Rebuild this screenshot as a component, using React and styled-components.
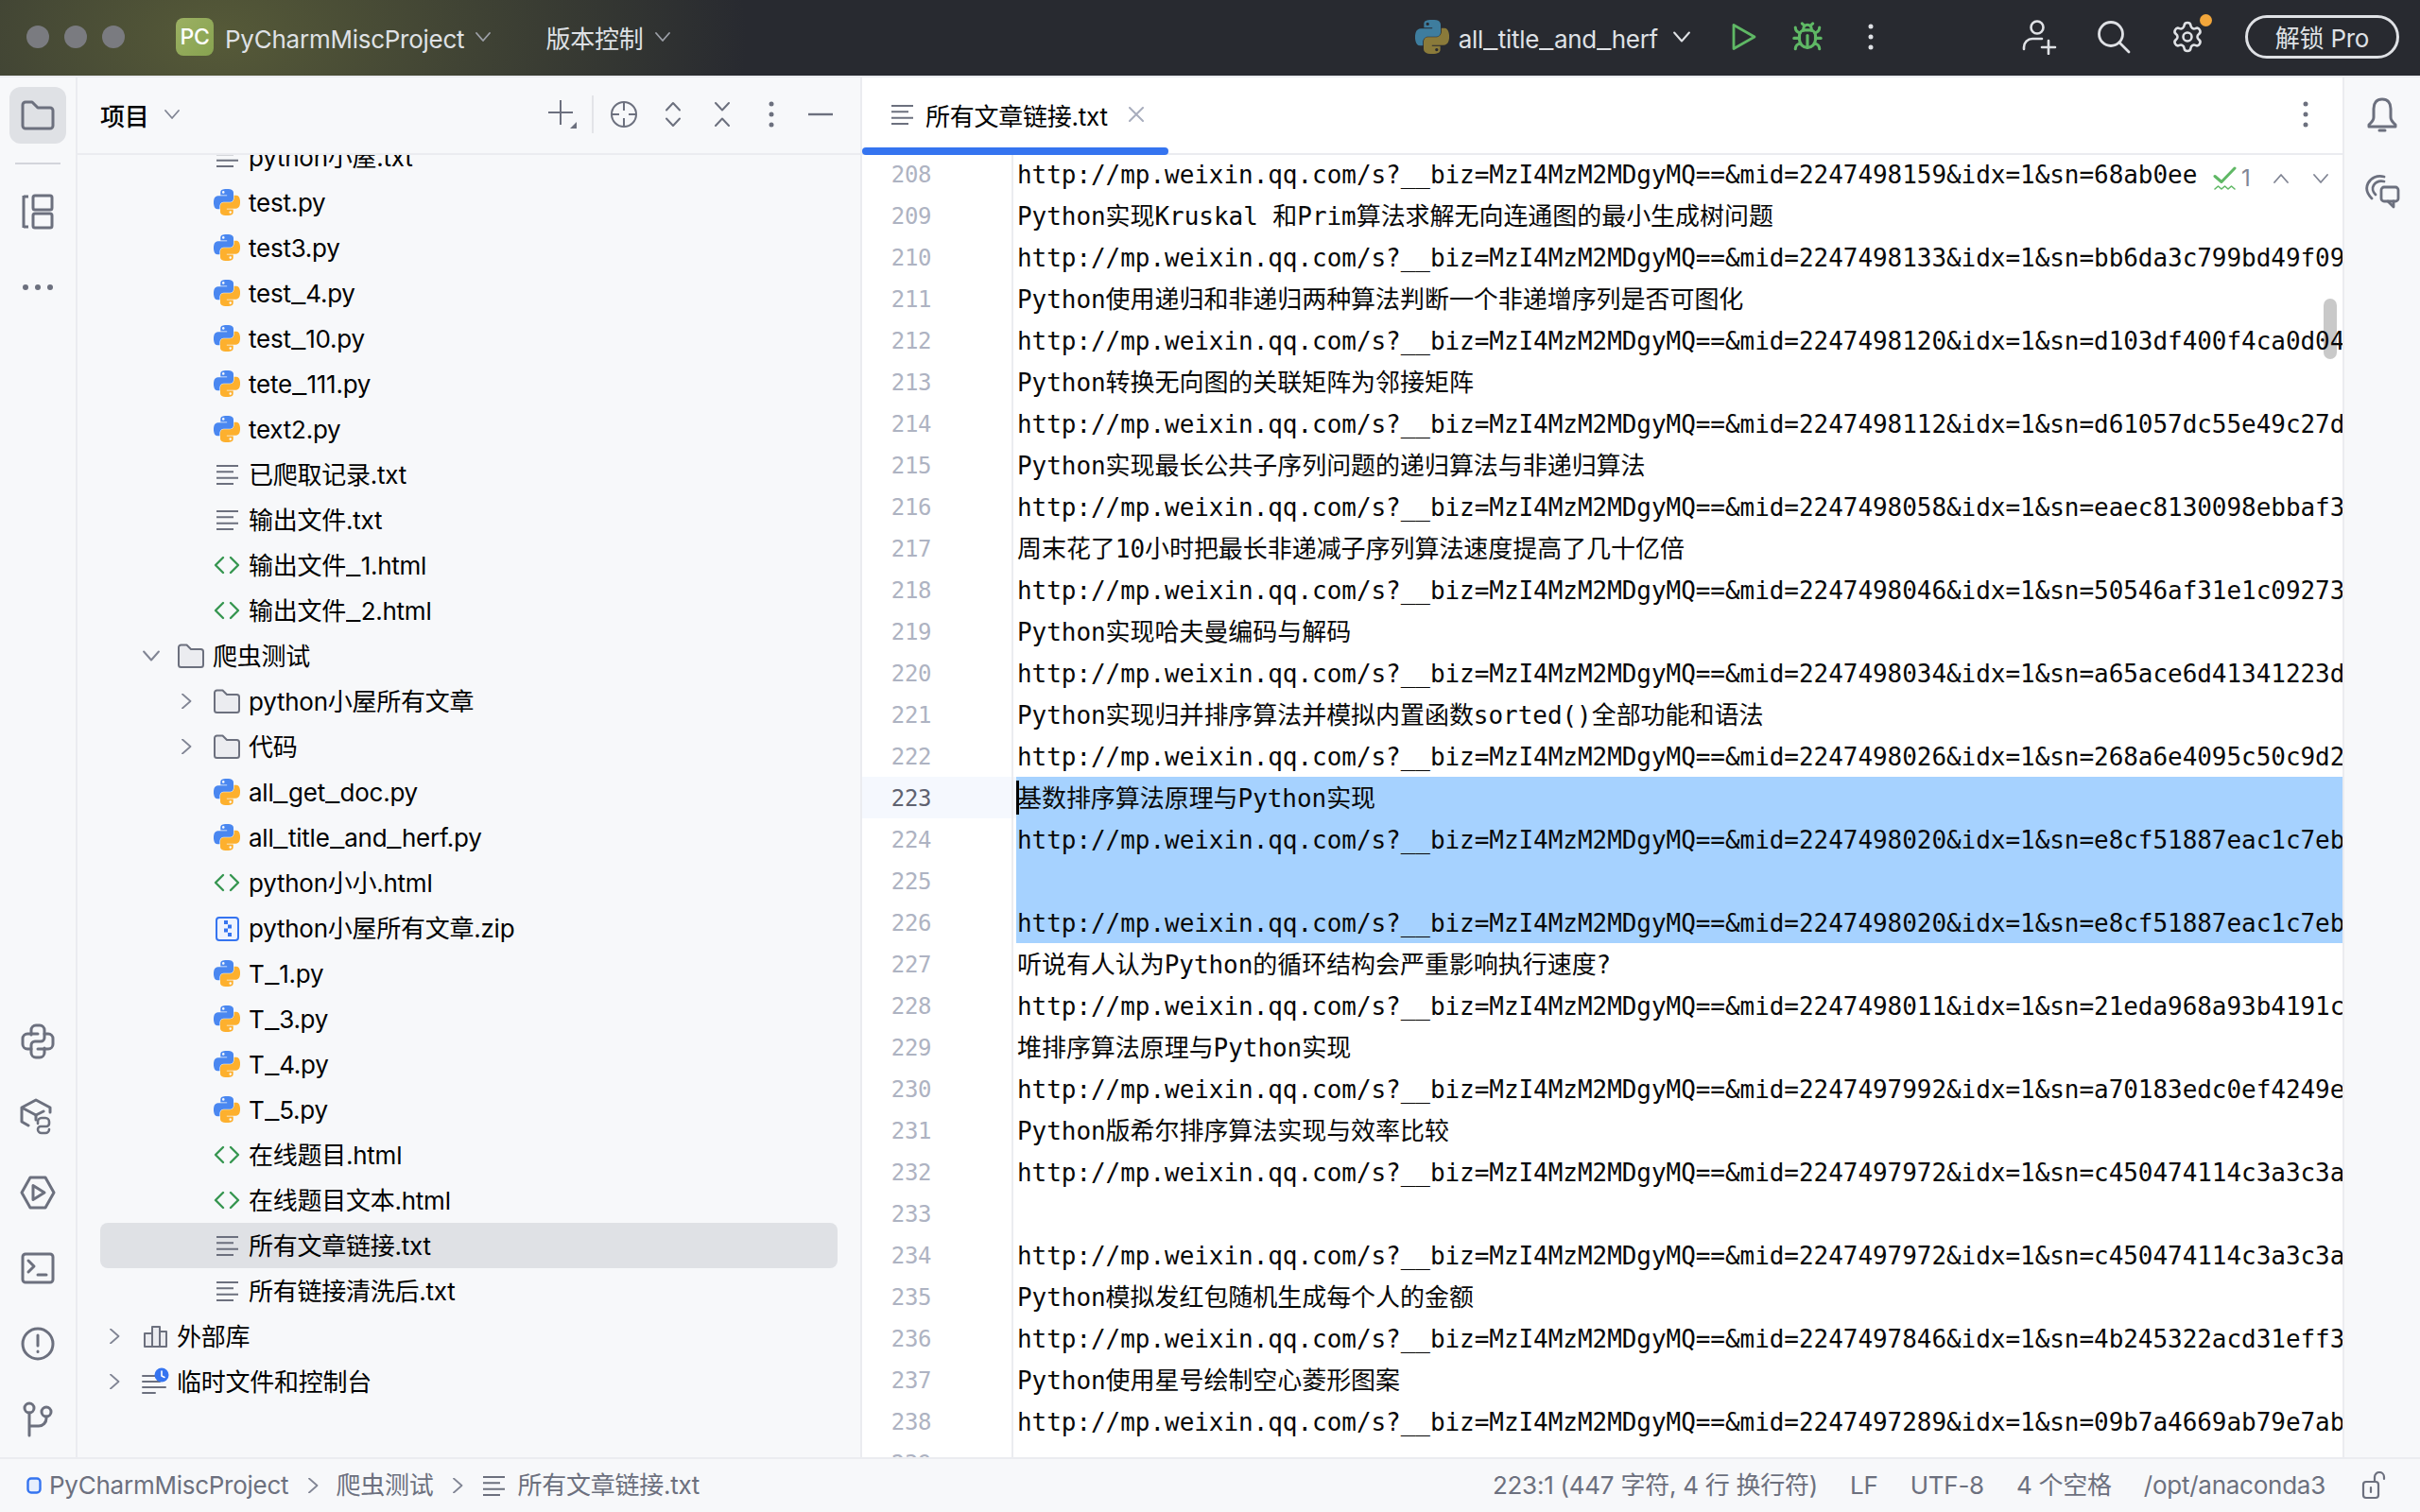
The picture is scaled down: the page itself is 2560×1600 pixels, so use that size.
import React from 'react';
import styled, { createGlobalStyle } from 'styled-components';
import { Bug, Settings } from 'lucide-react';

const GlobalStyle = createGlobalStyle`
  html, body { margin: 0; padding: 0; background: #f7f8fa; }
  body { font-family: Inter, "Noto Sans CJK SC", sans-serif; }
  * { box-sizing: border-box; }
`;

const tree = [
  { name: 'python小屋.txt', kind: 'text', depth: 2 },
  { name: 'test.py', kind: 'py', depth: 2 },
  { name: 'test3.py', kind: 'py', depth: 2 },
  { name: 'test_4.py', kind: 'py', depth: 2 },
  { name: 'test_10.py', kind: 'py', depth: 2 },
  { name: 'tete_111.py', kind: 'py', depth: 2 },
  { name: 'text2.py', kind: 'py', depth: 2 },
  { name: '已爬取记录.txt', kind: 'text', depth: 2 },
  { name: '输出文件.txt', kind: 'text', depth: 2 },
  { name: '输出文件_1.html', kind: 'html', depth: 2 },
  { name: '输出文件_2.html', kind: 'html', depth: 2 },
  { name: '爬虫测试', kind: 'folder', depth: 1, open: true },
  { name: 'python小屋所有文章', kind: 'folder', depth: 2, closed: true },
  { name: '代码', kind: 'folder', depth: 2, closed: true },
  { name: 'all_get_doc.py', kind: 'py', depth: 2 },
  { name: 'all_title_and_herf.py', kind: 'py', depth: 2 },
  { name: 'python小小.html', kind: 'html', depth: 2 },
  { name: 'python小屋所有文章.zip', kind: 'zip', depth: 2 },
  { name: 'T_1.py', kind: 'py', depth: 2 },
  { name: 'T_3.py', kind: 'py', depth: 2 },
  { name: 'T_4.py', kind: 'py', depth: 2 },
  { name: 'T_5.py', kind: 'py', depth: 2 },
  { name: '在线题目.html', kind: 'html', depth: 2 },
  { name: '在线题目文本.html', kind: 'html', depth: 2 },
  { name: '所有文章链接.txt', kind: 'text', depth: 2, selected: true },
  { name: '所有链接清洗后.txt', kind: 'text', depth: 2 },
  { name: '外部库', kind: 'lib', depth: 0, closed: true },
  { name: '临时文件和控制台', kind: 'scratch', depth: 0, closed: true },
];

const url = (mid, sn) =>
  `http://mp.weixin.qq.com/s?__biz=MzI4MzM2MDgyMQ==&mid=${mid}&idx=1&sn=${sn}`;

const lines = [
  url('2247498159', '68ab0eea1c5e2d9x'),
  'Python实现Kruskal 和Prim算法求解无向连通图的最小生成树问题',
  url('2247498133', 'bb6da3c799bd49f09'),
  'Python使用递归和非递归两种算法判断一个非递增序列是否可图化',
  url('2247498120', 'd103df400f4ca0d04'),
  'Python转换无向图的关联矩阵为邻接矩阵',
  url('2247498112', 'd61057dc55e49c27d'),
  'Python实现最长公共子序列问题的递归算法与非递归算法',
  url('2247498058', 'eaec8130098ebbaf3'),
  '周末花了10小时把最长非递减子序列算法速度提高了几十亿倍',
  url('2247498046', '50546af31e1c09273'),
  'Python实现哈夫曼编码与解码',
  url('2247498034', 'a65ace6d41341223d'),
  'Python实现归并排序算法并模拟内置函数sorted()全部功能和语法',
  url('2247498026', '268a6e4095c50c9d2'),
  '基数排序算法原理与Python实现',
  url('2247498020', 'e8cf51887eac1c7eb'),
  '',
  url('2247498020', 'e8cf51887eac1c7eb'),
  '听说有人认为Python的循环结构会严重影响执行速度?',
  url('2247498011', '21eda968a93b4191c'),
  '堆排序算法原理与Python实现',
  url('2247497992', 'a70183edc0ef4249e'),
  'Python版希尔排序算法实现与效率比较',
  url('2247497972', 'c450474114c3a3c3a'),
  '',
  url('2247497972', 'c450474114c3a3c3a'),
  'Python模拟发红包随机生成每个人的金额',
  url('2247497846', '4b245322acd31eff3'),
  'Python使用星号绘制空心菱形图案',
  url('2247497289', '09b7a4669ab79e7ab'),
  '',
];

// icons
const G = '#6c707e';
const Svg = styled.svg`
  display: block;
  flex: none;
  fill: none;
  stroke-linecap: round;
  stroke-linejoin: round;
`;

const snake =
  'M54.9 0C50.3 0 46 .4 42.1 1.1 30.7 3.1 28.6 7.3 28.6 15v10.2h27v3.4H18.5c-7.9 0-14.7 4.7-16.9 13.7-2.5 10.3-2.6 16.7 0 27.4 1.9 8 6.5 13.6 14.3 13.6h9.3V71c0-8.9 7.7-16.8 16.9-16.8H69c7.5 0 13.5-6.2 13.5-13.7V15c0-7.3-6.2-12.7-13.5-13.9C64.4.3 59.6 0 54.9 0ZM40.3 8.3a5.1 5.1 0 1 1 0 10.2 5.1 5.1 0 0 1 0-10.2Z';

const PythonIcon = ({ size = 28, blue = '#4a87f0', yellow = '#fdb02e' }) => (
  <Svg width={size} height={size} viewBox="0 0 110 110">
    <path d={snake} fill={blue} fillRule="evenodd" />
    <path d={snake} fill={yellow} fillRule="evenodd" transform="rotate(180 55 55)" />
  </Svg>
);

const TextIcon = ({ color = G }) => (
  <Svg width="28" height="24" viewBox="0 0 28 24" stroke={color} strokeWidth="2">
    <path d="M3 3h23M3 9.300h18M3 15.700h23M3 22h18" strokeLinecap="butt" />
  </Svg>
);

const HtmlIcon = () => (
  <Svg width="28" height="22" viewBox="0 0 28 22" stroke="#369650" strokeWidth="2.400">
    <path d="M10 3 2 11l8 8M18 3l8 8-8 8" />
  </Svg>
);

const FolderIcon = () => (
  <Svg width="28" height="26" viewBox="0 0 28 26" stroke={G} strokeWidth="2" style={{ fill: '#ebecf0' }}>
    <path d="M1 4a2.500 2.500 0 0 1 2.500-2.500h6L14 6h10.500A2.500 2.500 0 0 1 27 8.500v14a2.500 2.500 0 0 1-2.500 2.500h-21A2.500 2.500 0 0 1 1 22.500Z" />
  </Svg>
);

const ZipIcon = () => (
  <Svg width="28" height="28" viewBox="0 0 28 28">
    <rect x="3" y="3" width="23" height="24" rx="3" fill="#eef3fe" stroke="#3574f0" strokeWidth="2" />
    <path d="M11 6h4v4h-4zM15 10.500h4v4h-4zM11 14.500h4v4h-4zM15 19h4v4h-4z" fill="#3574f0" />
  </Svg>
);

const LibIcon = () => (
  <Svg width="28" height="24" viewBox="0 0 28 24" stroke={G} strokeWidth="2" style={{ fill: '#ebecf0' }}>
    <path d="M3 9h8v14H3zM11 2h8v21h-8zM19 7h7v16h-7z" />
  </Svg>
);

const ScratchIcon = () => (
  <Svg width="30" height="30" viewBox="0 0 30 30">
    <path d="M2 9h13M2 15h18M2 21h24M2 27h13" stroke={G} strokeWidth="2" />
    <circle cx="22" cy="8" r="7.500" fill="#3574f0" />
    <path d="M22 4v5l3 1.500" stroke="#fff" strokeWidth="1.600" />
  </Svg>
);

const fileIcons = {
  py: <PythonIcon />,
  text: <TextIcon />,
  html: <HtmlIcon />,
  folder: <FolderIcon />,
  zip: <ZipIcon />,
  lib: <LibIcon />,
  scratch: <ScratchIcon />,
};

const ChevronDown = ({ size = 16, color = G, width = 1.800 }) => (
  <Svg width={size} height={size} viewBox="0 0 16 16" stroke={color} strokeWidth={width}>
    <path d="M1 4 8 12l7-8" />
  </Svg>
);

const ChevronRight = ({ size = 16, color = '#818594', width = 1.800 }) => (
  <Svg width={size} height={size} viewBox="0 0 16 16" stroke={color} strokeWidth={width}>
    <path d="M4 .5 12.500 8 4 15.500" />
  </Svg>
);

const ChevronUp = ({ size = 16, color = G, width = 1.800 }) => (
  <Svg width={size} height={size} viewBox="0 0 16 16" stroke={color} strokeWidth={width}>
    <path d="M1 12 8 4l7 8" />
  </Svg>
);

const Dots = ({ color = G, h = 28 }) => (
  <Svg width="6" height={h} viewBox={`0 0 6 ${h}`} style={{ fill: color }}>
    <circle cx="3" cy="3" r="2.500" />
    <circle cx="3" cy={h / 2} r="2.500" />
    <circle cx="3" cy={h - 3} r="2.500" />
  </Svg>
);

const StripFolder = () => (
  <Svg width="36" height="32" viewBox="0 0 36 32" stroke={G} strokeWidth="3">
    <path d="M2 5a3 3 0 0 1 3-3h7l6 6h13a3 3 0 0 1 3 3v16a3 3 0 0 1-3 3H5a3 3 0 0 1-3-3Z" />
  </Svg>
);

const StripStructure = () => (
  <Svg width="34" height="38" viewBox="0 0 34 38" stroke={G} strokeWidth="3">
    <path d="M2 2v34M2 3h5M2 35h5" strokeLinecap="butt" />
    <rect x="12" y="2" width="20" height="15" rx="2" />
    <rect x="12" y="21" width="20" height="15" rx="2" />
  </Svg>
);

const StripDots = () => (
  <Svg width="34" height="8" viewBox="0 0 34 8" style={{ fill: G }}>
    <circle cx="4" cy="4" r="3" />
    <circle cx="17" cy="4" r="3" />
    <circle cx="30" cy="4" r="3" />
  </Svg>
);

const StripPython = () => (
  <Svg width="36" height="38" viewBox="0 0 36 38" stroke={G} strokeWidth="3">
    <path d="M11 12V7a5 5 0 0 1 5-5h4a5 5 0 0 1 5 5v8a4 4 0 0 1-4 4h-6a4 4 0 0 0-4 4v4H7a5 5 0 0 1-5-5v-6a5 5 0 0 1 5-5h11" />
    <path d="M25 26v5a5 5 0 0 1-5 5h-4a5 5 0 0 1-5-5v-4M25 11h4a5 5 0 0 1 5 5v6a5 5 0 0 1-5 5H18" />
  </Svg>
);

const StripPackage = () => (
  <Svg width="38" height="40" viewBox="0 0 38 40" stroke={G} strokeWidth="3">
    <path d="M9 29 2 25V10l15-8 15 8v5M2 10l15 8 8-4" />
    <path d="M17 18v5" />
    <path d="M19 27v-2a4 4 0 0 1 4-4h4a4 4 0 0 1 4 4v2a3 3 0 0 1-3 3h-6a3 3 0 0 0-3 3v0a4 4 0 0 0 4 4h4a4 4 0 0 0 4-4" strokeWidth="2.600" />
  </Svg>
);

const StripRun = () => (
  <Svg width="38" height="38" viewBox="0 0 38 38" stroke={G} strokeWidth="3">
    <path d="M11 3h16l9 16-9 16H11L2 19Z" />
    <path d="M14 11.500v15L26 19Z" />
  </Svg>
);

const StripTerminal = () => (
  <Svg width="36" height="34" viewBox="0 0 36 34" stroke={G} strokeWidth="3">
    <rect x="2" y="2" width="32" height="30" rx="3" />
    <path d="m8 9 6 6-6 6M18 24h9" />
  </Svg>
);

const StripProblems = () => (
  <Svg width="36" height="36" viewBox="0 0 36 36" stroke={G} strokeWidth="3">
    <circle cx="18" cy="18" r="16" />
    <path d="M18 9v11M18 26v.5" />
  </Svg>
);

const StripGit = () => (
  <Svg width="32" height="38" viewBox="0 0 32 38" stroke={G} strokeWidth="3">
    <circle cx="7" cy="7" r="5" />
    <circle cx="25" cy="11" r="5" />
    <path d="M7 12v24M25 16v2a8 8 0 0 1-8 8H7" />
  </Svg>
);

const Bell = () => (
  <Svg width="34" height="38" viewBox="0 0 34 38" stroke={G} strokeWidth="3">
    <path d="M17 2C11 2 8 6 8 12v9c0 4-3 6-5 8v2h28v-2c-2-2-5-4-5-8v-9c0-6-3-10-9-10Z" />
    <path d="M14 35h6" />
  </Svg>
);

const AiChat = () => (
  <Svg width="38" height="38" viewBox="0 0 38 38" stroke={G} strokeWidth="2.800">
    <path d="M8 27C3 22 1 17 4 11S14 2 21 4" />
    <path d="M12 23c-3-3-4-7-2-10s6-5 11-4" />
    <rect x="18" y="15" width="18" height="15" rx="3" />
    <path d="M31 30v6l-6-6" />
  </Svg>
);

const PlusDrop = () => (
  <Svg width="32" height="32" viewBox="0 0 32 32" stroke={G} strokeWidth="2">
    <path d="M14 1v26M1 14h26" strokeLinecap="butt" />
    <path d="M31 24v7h-7Z" style={{ fill: G }} strokeWidth="0" />
  </Svg>
);

const Crosshair = () => (
  <Svg width="30" height="30" viewBox="0 0 30 30" stroke={G} strokeWidth="2">
    <circle cx="15" cy="15" r="13" />
    <path d="M15 2v9M15 19v9M2 15h8M20 15h8" strokeLinecap="butt" />
  </Svg>
);

const ExpandAll = () => (
  <Svg width="18" height="28" viewBox="0 0 18 28" stroke={G} strokeWidth="2">
    <path d="M2 9.500 9 2l7 7.500M2 18.500 9 26l7-7.500" />
  </Svg>
);

const CollapseAll = () => (
  <Svg width="18" height="28" viewBox="0 0 18 28" stroke={G} strokeWidth="2">
    <path d="M2 2l7 7.500L16 2M2 26l7-7.500 7 7.500" />
  </Svg>
);

const Minus = () => (
  <Svg width="26" height="4" viewBox="0 0 26 4" stroke={G} strokeWidth="2.400">
    <path d="M0 2h26" strokeLinecap="butt" />
  </Svg>
);

const CloseX = () => (
  <Svg width="16" height="16" viewBox="0 0 16 16" stroke="#a8adbd" strokeWidth="2">
    <path d="m1 1 14 14M15 1 1 15" />
  </Svg>
);

const RunIcon = () => (
  <Svg width="28" height="30" viewBox="0 0 28 30" stroke="#5fb865" strokeWidth="2.800">
    <path d="M3 2.500v25L25 15Z" />
  </Svg>
);

const AddUser = () => (
  <Svg width="38" height="38" viewBox="0 0 38 38" stroke="#dfe1e5" strokeWidth="2.600">
    <circle cx="16" cy="9" r="6.500" />
    <path d="M2 32v-2a9 9 0 0 1 9-9h10M28 23v14M21 30h14" />
  </Svg>
);

const Search = () => (
  <Svg width="36" height="36" viewBox="0 0 36 36" stroke="#dfe1e5" strokeWidth="2.800">
    <circle cx="15" cy="15" r="12.500" />
    <path d="m24 24 10 10" />
  </Svg>
);

const CheckMark = () => (
  <Svg width="26" height="26" viewBox="0 0 26 26">
    <path d="M2 10.500 9 16.500 23 2" stroke="#5fb865" strokeWidth="3" />
    <path d="M2 24l3.500-3 3.500 3 3.500-3 3.500 3 3.500-3 3.500 3" stroke="#5fb865" strokeWidth="1.600" />
  </Svg>
);

const Lock = () => (
  <Svg width="28" height="30" viewBox="0 0 28 30" stroke={G} strokeWidth="2.200">
    <rect x="2" y="11" width="16" height="17" rx="3" />
    <path d="M10 17v5" />
    <path d="M14 11V6a5 5 0 0 1 10 0v2" />
  </Svg>
);

const ProjectDot = () => (
  <Svg width="16" height="18" viewBox="0 0 16 18">
    <rect x="1.500" y="1.500" width="13" height="15" rx="3.500" fill="#e7effd" stroke="#3574f0" strokeWidth="2.400" />
  </Svg>
);

// layout
const Page = styled.div`
  width: 2560px;
  height: 1600px;
  display: flex;
  flex-direction: column;
  overflow: hidden;
  font-family: Inter, "Noto Sans CJK SC", sans-serif;
  font-size: 26px;
  line-height: 32px;
  letter-spacing: -0.25px;
  background: #f7f8fa;
`;

// text sits a little lower than the icons beside it
const Label = styled.span`
  padding-top: ${(p) => p.$drop || 0}px;
  margin-right: ${(p) => p.$right || 0}px;
`;

const TitleBar = styled.header`
  flex: none;
  height: 82px;
  display: flex;
  align-items: center;
  padding: 0 22px 2px 28px;
  border-bottom: 2px solid #ebecf0;
  color: #dfe1e5;
  background:
    radial-gradient(ellipse 560px 340px at 230px 40px, #565a38 0%, rgba(86, 90, 56, 0) 100%),
    #282a30;
`;

const Lights = styled.div`
  display: flex;
  gap: 16px;
  margin-right: 54px;
`;

const Light = styled.span`
  width: 24px;
  height: 24px;
  border-radius: 50%;
  background: #7a7b80;
`;

const ProjectBadge = styled.div`
  width: 40px;
  height: 40px;
  border-radius: 8px;
  margin-right: 12px;
  display: flex;
  align-items: center;
  justify-content: center;
  color: #fff;
  font-size: 23px;
  font-weight: 500;
  background: linear-gradient(135deg, #9cb063, #87a350);
`;

const TitleMenu = styled.div`
  display: flex;
  align-items: center;
  gap: ${(p) => p.$gap || 12}px;
  margin-right: ${(p) => p.$after || 0}px;
  white-space: nowrap;
`;

const RunSlot = styled.div`
  flex: none;
  width: ${(p) => p.$w}px;
  display: flex;
  align-items: center;
  justify-content: center;
  margin-left: ${(p) => p.$left || 0}px;
  margin-right: ${(p) => p.$right || 0}px;
`;

const RunConfig = styled.div`
  margin-left: auto;
  display: flex;
  align-items: center;
  gap: 10px;
  white-space: nowrap;
`;

const BadgeWrap = styled.div`
  position: relative;
  display: flex;
`;

const OrangeDot = styled.span`
  position: absolute;
  top: -6px;
  right: -8px;
  width: 13px;
  height: 13px;
  border-radius: 50%;
  background: #f2a63b;
`;

const ProButton = styled.div`
  flex: none;
  width: 163px;
  height: 46px;
  margin-left: 22px;
  padding-top: 3px;
  border: 3px solid #dfe1e5;
  border-radius: 23px;
  display: flex;
  align-items: center;
  justify-content: center;
`;

const Middle = styled.div`
  flex: 1;
  min-height: 0;
  display: flex;
`;

const LeftStrip = styled.nav`
  flex: none;
  width: 82px;
  display: flex;
  flex-direction: column;
  align-items: center;
  padding: 10px 0;
  border-right: 2px solid #ebecf0;
`;

const StripButton = styled.div`
  flex: none;
  width: 60px;
  height: 60px;
  margin-bottom: 20px;
  border-radius: 12px;
  display: flex;
  align-items: center;
  justify-content: center;
  background: ${(p) => (p.$active ? '#dfe1e5' : 'transparent')};
  &:last-child { margin-bottom: 0; }
`;

const StripSep = styled.div`
  width: 48px;
  height: 2px;
  flex: none;
  margin: 0 0 20px;
  background: #d3d5db;
`;

const StripBottom = styled.div`
  margin-top: auto;
  display: flex;
  flex-direction: column;
  align-items: center;
`;

const ProjectPanel = styled.aside`
  flex: none;
  width: 830px;
  display: flex;
  flex-direction: column;
  border-right: 2px solid #ebecf0;
  min-height: 0;
`;

const PanelHeader = styled.div`
  flex: none;
  height: 82px;
  padding: 0 16px 2px 24px;
  display: flex;
  align-items: center;
  border-bottom: 2px solid #ebecf0;
`;

const PanelTitle = styled.div`
  display: flex;
  align-items: center;
  gap: 16px;
  font-weight: 500;
  color: #000;
  margin-right: auto;
`;

const HeaderSep = styled.div`
  width: 2px;
  height: 40px;
  margin: 0 6px 0 5px;
  background: #e3e4e8;
`;

const TreeScroll = styled.div`
  flex: 1;
  min-height: 0;
  overflow: hidden;
`;

const TreeList = styled.ul`
  list-style: none;
  margin: -22px 0 0;
  padding: 0;
`;

const TreeRow = styled.li`
  height: 48px;
  margin: 0 24px;
  padding-left: ${(p) => 12 + p.$depth * 38}px;
  display: flex;
  align-items: center;
  border-radius: 8px;
  color: #000;
  white-space: nowrap;
  background: ${(p) => (p.$selected ? '#dfe1e5' : 'transparent')};
`;

const ChevronSlot = styled.span`
  flex: none;
  width: 37px;
  margin-left: -5px;
  display: flex;
`;

const IconSlot = styled.span`
  flex: none;
  width: 28px;
  margin-right: 9px;
  display: flex;
  align-items: center;
  justify-content: center;
`;

// the reference's underscore is wider than this Inter's
const Underscore = styled.span`
  display: inline-block;
  margin-right: 4px;
  transform: scaleX(1.3);
  transform-origin: left center;
`;

const FileName = ({ name, drop = 2, right = 0 }) => (
  <Label $drop={drop} $right={right}>
    {name.split('_').map((part, i) => (
      <React.Fragment key={i}>
        {i > 0 && <Underscore>_</Underscore>}
        {part}
      </React.Fragment>
    ))}
  </Label>
);

const Editor = styled.main`
  flex: 1;
  min-width: 0;
  display: flex;
  flex-direction: column;
  background: #fff;
`;

const TabBar = styled.div`
  position: relative;
  flex: none;
  height: 82px;
  display: flex;
  align-items: center;
  padding: 0 36px 2px 28px;
  border-bottom: 2px solid #ebecf0;
`;

const TabLabel = styled.div`
  display: flex;
  align-items: center;
  gap: 11px;
  color: #000;
  white-space: nowrap;
`;

const TabClose = styled.span`
  margin-left: 22px;
  margin-right: auto;
  display: flex;
`;

const TabUnderline = styled.div`
  position: absolute;
  left: 0;
  bottom: -2px;
  width: 324px;
  height: 8px;
  border-radius: 4px;
  background: #3574f0;
`;

const EditorBody = styled.div`
  position: relative;
  flex: 1;
  min-height: 0;
  overflow: hidden;
`;

const Lines = styled.div`
  margin-top: -2px;
  font-family: "DejaVu Sans Mono", "Noto Sans CJK SC", monospace;
  font-size: 26px;
  letter-spacing: -0.05px;
  color: #080808;
`;

const Line = styled.div`
  height: 44px;
  display: flex;
  background: ${(p) => (p.$current ? '#f5f8fe' : 'transparent')};
`;

const LineNo = styled.div`
  flex: none;
  width: 160px;
  padding-right: 85px;
  text-align: right;
  line-height: 47px;
  font-size: 24px;
  letter-spacing: -0.4px;
  color: ${(p) => (p.$current ? '#5f6270' : '#aeb3c2')};
  border-right: 2px solid #ebecf0;
`;

const Code = styled.div`
  position: relative;
  flex: 1;
  min-width: 0;
  margin-left: 3px;
  padding-left: 1px;
  line-height: 47px;
  white-space: pre;
  overflow: hidden;
  background: ${(p) => (p.$selected ? '#a6d2ff' : p.$current ? '#f5f8fe' : 'transparent')};
`;

const Caret = styled.span`
  position: absolute;
  left: 0;
  top: 4px;
  width: 3px;
  height: 36px;
  background: #000;
`;

const InspectionWidget = styled.div`
  position: absolute;
  top: 2px;
  left: 1412px;
  width: 149px;
  height: 42px;
  display: flex;
  align-items: center;
  padding: 4px 0 0 17px;
  background: #fff;
  font-size: 24px;
  color: #818594;
`;

const WidgetCount = styled.span`
  margin-left: 4px;
  margin-right: 24px;
`;

const WidgetArrow = styled.span`
  display: flex;
  margin-right: 26px;
`;

const ScrollThumb = styled.div`
  position: absolute;
  left: 1546px;
  top: 152px;
  width: 14px;
  height: 64px;
  border-radius: 7px;
  background: rgba(0, 0, 0, 0.21);
`;

const RightStrip = styled.nav`
  flex: none;
  width: 82px;
  display: flex;
  flex-direction: column;
  align-items: center;
  padding-top: 10px;
  border-left: 2px solid #ebecf0;
`;

const StatusBar = styled.footer`
  flex: none;
  height: 58px;
  display: flex;
  align-items: center;
  padding: 0 34px 0 28px;
  border-top: 2px solid #ebecf0;
  color: ${G};
  white-space: nowrap;
`;

const Crumb = styled.div`
  display: flex;
  align-items: center;
  gap: ${(p) => p.$gap || 11}px;
`;

const CrumbSep = styled.span`
  display: flex;
  margin: 0 16px 0 18px;
`;

const StatusRight = styled.div`
  margin-left: auto;
  display: flex;
  align-items: center;
  gap: 34px;
`;

const LockSlot = styled.span`
  display: flex;
  margin-left: 4px;
`;

const App = () => {
  return (
    <Page>
      <GlobalStyle />
      <TitleBar>
        <Lights>
          <Light />
          <Light />
          <Light />
        </Lights>
        <ProjectBadge>PC</ProjectBadge>
        <TitleMenu $after={58}>
          <Label $drop={5}>PyCharmMiscProject</Label>
          <ChevronDown color="#9da0a8" />
        </TitleMenu>
        <TitleMenu $gap={13}>
          <Label $drop={5}>版本控制</Label>
          <ChevronDown color="#9da0a8" />
        </TitleMenu>
        <RunConfig>
          <PythonIcon size={36} blue="#3e7d9e" yellow="#8a7a3a" />
          <FileName name="all_title_and_herf" drop={5} right={6} />
          <ChevronDown color="#dfe1e5" size={18} />
        </RunConfig>
        <RunSlot $w={67} $left={23}><RunIcon /></RunSlot>
        <RunSlot $w={67}><Bug size={34} color="#5fb865" strokeWidth={2.2} /></RunSlot>
        <RunSlot $w={67} $right={107}><Dots color="#dfe1e5" /></RunSlot>
        <RunSlot $w={78}><AddUser /></RunSlot>
        <RunSlot $w={78}><Search /></RunSlot>
        <RunSlot $w={78}>
          <BadgeWrap>
            <Settings size={36} color="#dfe1e5" strokeWidth={1.7} />
            <OrangeDot />
          </BadgeWrap>
        </RunSlot>
        <ProButton>解锁 Pro</ProButton>
      </TitleBar>

      <Middle>
        <LeftStrip>
          <StripButton $active><StripFolder /></StripButton>
          <StripSep />
          <StripButton><StripStructure /></StripButton>
          <StripButton><StripDots /></StripButton>
          <StripBottom>
            <StripButton><StripPython /></StripButton>
            <StripButton><StripPackage /></StripButton>
            <StripButton><StripRun /></StripButton>
            <StripButton><StripTerminal /></StripButton>
            <StripButton><StripProblems /></StripButton>
            <StripButton><StripGit /></StripButton>
          </StripBottom>
        </LeftStrip>

        <ProjectPanel>
          <PanelHeader>
            <PanelTitle>
              <Label $drop={5}>项目</Label>
              <ChevronDown color="#818594" />
            </PanelTitle>
            <RunSlot $w={52}><PlusDrop /></RunSlot>
            <HeaderSep />
            <RunSlot $w={52}><Crosshair /></RunSlot>
            <RunSlot $w={52}><ExpandAll /></RunSlot>
            <RunSlot $w={52}><CollapseAll /></RunSlot>
            <RunSlot $w={52}><Dots /></RunSlot>
            <RunSlot $w={52}><Minus /></RunSlot>
          </PanelHeader>
          <TreeScroll>
            <TreeList>
              {tree.map((item) => (
                <TreeRow key={item.name} $depth={item.depth} $selected={item.selected}>
                  <ChevronSlot>
                    {item.open && <ChevronDown color="#818594" size={18} />}
                    {item.closed && <ChevronRight />}
                  </ChevronSlot>
                  <IconSlot>{fileIcons[item.kind]}</IconSlot>
                  <FileName name={item.name} />
                </TreeRow>
              ))}
            </TreeList>
          </TreeScroll>
        </ProjectPanel>

        <Editor>
          <TabBar>
            <TabLabel>
              <TextIcon />
              <Label $drop={5}>所有文章链接.txt</Label>
            </TabLabel>
            <TabClose><CloseX /></TabClose>
            <Dots />
            <TabUnderline />
          </TabBar>
          <EditorBody>
            <Lines>
              {lines.map((text, i) => {
                const no = 208 + i;
                const current = no === 223;
                return (
                  <Line key={no} $current={current}>
                    <LineNo $current={current}>{no}</LineNo>
                    <Code $selected={no >= 223 && no <= 226} $current={current}>
                      {current && <Caret />}
                      {text}
                    </Code>
                  </Line>
                );
              })}
            </Lines>
            <InspectionWidget>
              <CheckMark />
              <WidgetCount>1</WidgetCount>
              <WidgetArrow><ChevronUp color="#818594" /></WidgetArrow>
              <WidgetArrow><ChevronDown color="#818594" /></WidgetArrow>
            </InspectionWidget>
            <ScrollThumb />
          </EditorBody>
        </Editor>

        <RightStrip>
          <StripButton><Bell /></StripButton>
          <StripButton><AiChat /></StripButton>
        </RightStrip>
      </Middle>

      <StatusBar>
        <Crumb $gap={8}>
          <ProjectDot />
          PyCharmMiscProject
        </Crumb>
        <CrumbSep><ChevronRight /></CrumbSep>
        <Crumb>爬虫测试</Crumb>
        <CrumbSep><ChevronRight /></CrumbSep>
        <Crumb>
          <TextIcon />
          所有文章链接.txt
        </Crumb>
        <StatusRight>
          <span>223:1 (447 字符, 4 行 换行符)</span>
          <span>LF</span>
          <span>UTF-8</span>
          <span>4 个空格</span>
          <span>/opt/anaconda3</span>
          <LockSlot><Lock /></LockSlot>
        </StatusRight>
      </StatusBar>
    </Page>
  );
};

export default App;
